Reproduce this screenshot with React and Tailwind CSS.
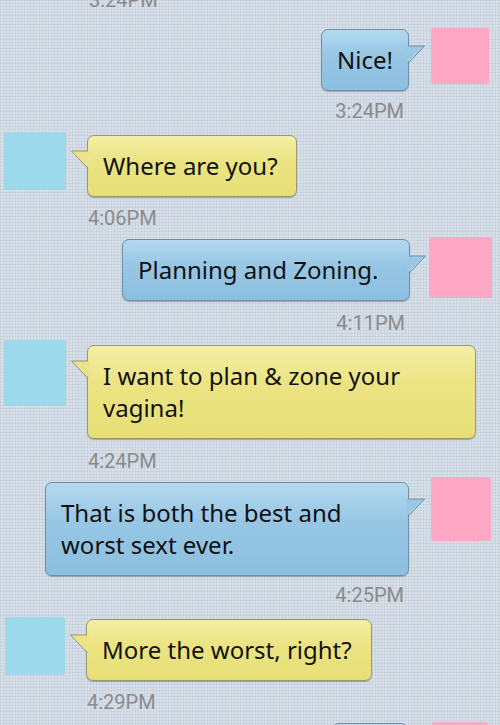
import React from "react";

const messages = [
  { id: 1, side: "right", text: "Nice!", time: "3:24PM", avatar: "w-[58px] h-[56px]", bubbleTop: "mt-[1px]", timeTop: "mt-[8px]", gap: "mt-[9px]", edge: "pr-[11px]", space: "mr-[22px]" },
  { id: 2, side: "left", text: "Where are you?", time: "4:06PM", avatar: "w-[62px] h-[58px]", bubbleTop: "mt-[3px]", timeTop: "mt-[9px]", gap: "mt-[7px]", width: "w-[210px]" },
  { id: 3, side: "right", text: "Planning and Zoning.", time: "4:11PM", avatar: "w-[63px] h-[61px]", bubbleTop: "mt-[2px]", timeTop: "mt-[10px]", gap: "mt-[5px]", edge: "pr-[8px]", space: "mr-[19px]", width: "w-[288px]" },
  { id: 4, side: "left", text: "I want to plan & zone your vagina!", time: "4:24PM", avatar: "w-[62px] h-[66px]", bubbleTop: "mt-[5px]", timeTop: "mt-[10px]", gap: "mt-[4px]", width: "w-[389px]" },
  { id: 5, side: "right", text: "That is both the best and worst sext ever.", time: "4:25PM", avatar: "w-[60px] h-[64px]", bubbleTop: "mt-[5px]", timeTop: "mt-[7px]", gap: "mt-[10px]", edge: "pr-[9px]", space: "mr-[22px]", width: "w-[364px]" },
  { id: 6, side: "left", text: "More the worst, right?", time: "4:29PM", avatar: "w-[60px] h-[58px]", bubbleTop: "mt-[2px]", timeTop: "mt-[9px]", gap: "mt-[8px]", avatarLeft: "ml-[1px]", width: "w-[286px]" },
  { id: 7, side: "right", text: "Yes!", time: "4:30PM", avatar: "w-[56px] h-[58px]", bubbleTop: "mt-[1px]", timeTop: "mt-[8px]", gap: "mt-[8px]", edge: "pr-[12px]", space: "mr-[24px]" },
];

function Tail({ side }) {
  if (side === "left") {
    return (
      <svg className="absolute left-[-17px] top-[14px]" width="19" height="20" viewBox="0 0 19 20">
        <polygon points="19,1 1,1 19,19" fill="#ebe386" />
        <polyline points="17,1 0.5,1 17,18.5" fill="none" stroke="#9b9869" strokeWidth="1" />
      </svg>
    );
  }
  return (
    <svg className="absolute right-[-17px] top-[15px]" width="19" height="20" viewBox="0 0 19 20">
      <polygon points="0,1 18,1 0,19" fill="#9ac9e6" />
      <polyline points="2,1 18.5,1 2,18.5" fill="none" stroke="#6f8fa6" strokeWidth="1" />
    </svg>
  );
}

function Bubble({ msg }) {
  const left = msg.side === "left";
  return (
    <div
      className={`relative ${msg.width || "w-fit"} rounded-[7px] border px-[15px] py-[14px] font-['Noto_Sans',sans-serif] text-[24px] leading-[32px] text-[#111] shadow-[0_1px_1px_rgba(0,0,0,0.25)] ${
        left
          ? "border-[#9b9869] bg-[linear-gradient(to_bottom,#f4eea6,#ece483_40%,#e7df76)]"
          : "border-[#6f8fa6] bg-[linear-gradient(to_bottom,#b4d9f0,#98c7e5_40%,#8cbfe0)]"
      }`}
    >
      <Tail side={msg.side} />
      {msg.text}
    </div>
  );
}

function Message({ msg }) {
  const avatar = (
    <div
      className={`${msg.avatar} shrink-0 rounded-[2px] ${
        msg.side === "left" ? "bg-[#9cd9ea]" : "bg-[#ffa8c6]"
      }`}
    />
  );

  if (msg.side === "left") {
    return (
      <div className={`flex items-start pl-[4px] ${msg.gap}`}>
        <div className={msg.avatarLeft}>{avatar}</div>
        <div className={`ml-[21px] flex flex-col items-start ${msg.bubbleTop}`}>
          <Bubble msg={msg} />
          <div className={`${msg.timeTop} pl-[1px] text-[20px] leading-[24px] text-[#8b8b8b]`}>{msg.time}</div>
        </div>
      </div>
    );
  }

  return (
    <div className={`flex items-start justify-end ${msg.edge} ${msg.gap}`}>
      <div className={`${msg.space} flex flex-col items-end ${msg.bubbleTop}`}>
        <Bubble msg={msg} />
        <div className={`${msg.timeTop} pr-[5px] text-[20px] leading-[24px] text-[#8b8b8b]`}>{msg.time}</div>
      </div>
      {avatar}
    </div>
  );
}

export default function App() {
  return (
    <div className="h-[725px] w-[500px] overflow-hidden bg-[#d7dfe8] bg-[linear-gradient(90deg,rgba(120,140,165,0.10)_1px,transparent_1px),linear-gradient(rgba(120,140,165,0.10)_1px,transparent_1px)] bg-[length:3px_3px] font-['Roboto',sans-serif]">
      <div className="-mt-[12px] pl-[89px] text-[20px] leading-[24px] text-[#8b8b8b]">3:24PM</div>
      {messages.map((m, i) => (
        <Message key={m.id} msg={{ ...m, gap: i === 0 ? "mt-[16px]" : messages[i - 1].gap }} />
      ))}
    </div>
  );
}
